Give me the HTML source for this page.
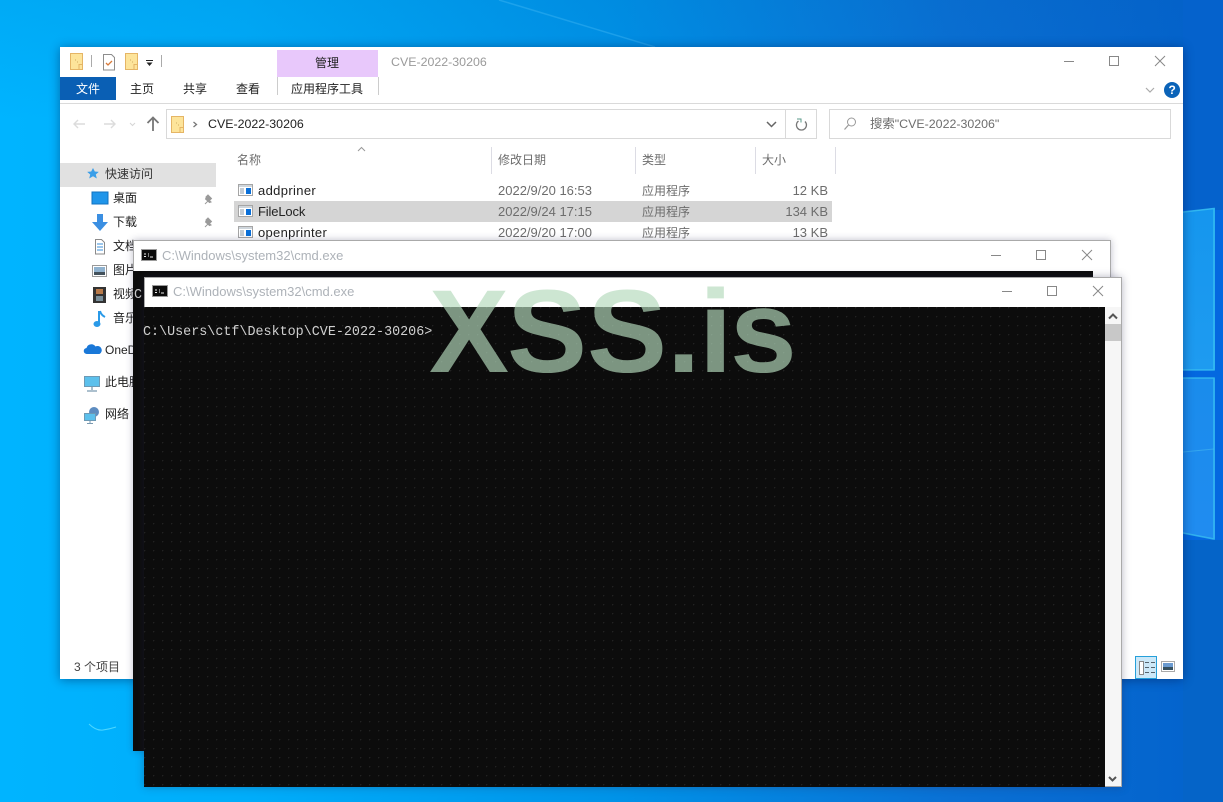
<!DOCTYPE html>
<html lang="zh"><head><meta charset="utf-8"><title>CVE-2022-30206</title>
<style>
html,body{margin:0;padding:0;width:1223px;height:802px;overflow:hidden;background:#0078dc}
body{position:relative;font-family:"Liberation Sans","Noto Sans CJK SC",sans-serif;font-size:12px;color:#222}
.t{position:absolute;white-space:nowrap;line-height:16px}
.box{position:absolute;box-sizing:border-box}
svg{position:absolute;left:0;top:0}
.f{font-size:13px;color:#222}
.d{font-size:13px;color:#6d6d6d}
.n{color:#6d6d6d}
.m{color:#adb2b8;font-size:13px}
</style></head><body>

<svg width="1223" height="802" viewBox="0 0 1223 802">
<defs>
<linearGradient id="bg" x1="0" y1="0" x2="1" y2="0">
<stop offset="0" stop-color="#00b4ff"/><stop offset=".2" stop-color="#00adfa"/><stop offset=".5" stop-color="#0093e8"/><stop offset=".78" stop-color="#0a70d4"/><stop offset="1" stop-color="#0362cc"/>
</linearGradient>
<linearGradient id="top" x1="0" y1="0" x2="0" y2="1"><stop offset="0" stop-color="#0050a0" stop-opacity=".1"/><stop offset="1" stop-color="#0050a0" stop-opacity="0"/></linearGradient>
<linearGradient id="p1" x1="0" y1="0" x2="0" y2="1"><stop offset="0" stop-color="#1596ee"/><stop offset="1" stop-color="#1e9bf0"/></linearGradient>
<linearGradient id="p2" x1="0" y1="0" x2="0" y2="1"><stop offset="0" stop-color="#1a8cec"/><stop offset="1" stop-color="#208cf0"/></linearGradient>
</defs>
<rect width="1223" height="802" fill="url(#bg)"/>
<rect width="1223" height="120" fill="url(#top)"/>
<rect x="1183" y="540" width="40" height="262" fill="#0564c8"/>
<rect x="1183" y="0" width="40" height="210" fill="#0562cc"/>
<rect x="1183" y="210" width="40" height="330" fill="#0468e0"/>
<polygon points="1183,212 1215,208 1215,370 1183,370" fill="url(#p1)"/>
<polygon points="1183,378 1215,378 1215,539 1183,533" fill="url(#p2)"/>
<polyline points="1183,212 1214,208.5 1214,370 1183,370" fill="none" stroke="#3cc4f2" stroke-width="1.6" opacity=".75"/>
<polyline points="1183,378 1214,378 1214,539 1183,533" fill="none" stroke="#3cc4f2" stroke-width="1.6" opacity=".75"/>
<line x1="1183" y1="452" x2="1214" y2="449" stroke="#4cc0f0" stroke-width="1" opacity=".5"/>
<line x1="499" y1="0" x2="655" y2="47" stroke="#6fd2ff" stroke-width="1.5" opacity=".25"/>
<path d="M89 724 Q96 731 103 730 Q110 729 116 727" fill="none" stroke="#5fe0ff" stroke-width="1" opacity=".8"/>
</svg>

<!-- Explorer -->
<div class="box" style="left:60px;top:47px;width:1123px;height:632px;background:#fff;box-shadow:0 1px 10px rgba(0,20,70,.45)"></div>
<div class="box" style="left:277px;top:50px;width:101px;height:27px;background:#e8c8fb"></div>
<div class="box" style="left:60px;top:77px;width:56px;height:23px;background:#0a5fb4"></div>
<div class="box" style="left:277px;top:77px;width:102px;height:18px;border-left:1px solid #ccc;border-right:1px solid #ccc"></div>
<div class="box" style="left:60px;top:103px;width:1123px;height:1px;background:#dadada"></div>
<div class="box" style="left:166px;top:109px;width:651px;height:30px;border:1px solid #d9d9d9"></div>
<div class="box" style="left:785px;top:109px;width:1px;height:30px;background:#d9d9d9"></div>
<div class="box" style="left:829px;top:109px;width:342px;height:30px;border:1px solid #d9d9d9"></div>
<div class="box" style="left:60px;top:163px;width:156px;height:24px;background:#e1e1e1"></div>
<div class="box" style="left:234px;top:201px;width:598px;height:21px;background:#d5d5d5"></div>
<div class="box" style="left:491px;top:147px;width:1px;height:27px;background:#dcdce4"></div>
<div class="box" style="left:635px;top:147px;width:1px;height:27px;background:#dcdce4"></div>
<div class="box" style="left:755px;top:147px;width:1px;height:27px;background:#dcdce4"></div>
<div class="box" style="left:835px;top:147px;width:1px;height:27px;background:#dcdce4"></div>
<div class="box" style="left:1135px;top:656px;width:22px;height:23px;background:#cce8f8;border:1px solid #26a0da"></div>

<svg width="1223" height="802" viewBox="0 0 1223 802">
<defs>
<g id="fold"><rect x=".5" y=".5" width="12" height="16" fill="#fde49a" stroke="#e5b565"/><path d="M9 16.500v-5h3.500" fill="none" stroke="#e5b565"/><path d="M5 7h1M7 9h1" stroke="#d0ab62"/></g>
<g id="exe"><rect x=".5" y=".5" width="14" height="11" fill="#fff" stroke="#a5a5a5"/><rect x="1" y="1" width="13" height="2" fill="#cfd6dc"/><rect x="8" y="4" width="5" height="6" fill="#0a6fd8"/><path d="M2 5h4M2 7h4M2 9h4" stroke="#8a9aa8"/></g>
</defs>
<use href="#fold" x="70" y="53"/><use href="#fold" x="125" y="53"/><use href="#fold" x="171" y="116"/>
<path d="M91.500 55v12M161.500 55v12" stroke="#aaa"/>
<path d="M103.500 54.500h8l3 3v12.500h-11z" fill="#fff" stroke="#8d8d8d"/><path d="M106 63l2 2 4-4" fill="none" stroke="#d77a3a" stroke-width="1.300"/>
<path d="M146 60.500h7" stroke="#222"/><path d="M146.500 62.500h6l-3 3.500z" fill="#222"/>
<!-- controls -->
<path d="M1064 61.500h10" stroke="#888"/><rect x="1109.500" y="56.500" width="9" height="9" fill="none" stroke="#888"/><path d="M1155 56l10 10M1165 56l-10 10" stroke="#888"/>
<path d="M1146 88l4 4 4-4" fill="none" stroke="#aaa" stroke-width="1.200"/>
<circle cx="1172" cy="90" r="8" fill="#0b63b8"/>
<!-- nav -->
<path d="M74 124h11M78 120l-4 4 4 4" fill="none" stroke="#dcdcdc" stroke-width="1.400"/>
<path d="M104 124h11M111 120l4 4-4 4" fill="none" stroke="#dcdcdc" stroke-width="1.400"/>
<path d="M130 123l2.500 2.500 2.500-2.500" fill="none" stroke="#d5d5d5"/>
<path d="M153 131v-13M147.500 123l5.500-5.500 5.500 5.500" fill="none" stroke="#777" stroke-width="1.800"/>
<path d="M193.500 122l3 2.500-3 2.500" fill="none" stroke="#777" stroke-width="1.300"/>
<path d="M767 122l4.500 4.500 4.500-4.500" fill="none" stroke="#666" stroke-width="1.500"/>
<path d="M805 121.500a5 5 0 1 1-6.500-.5" fill="none" stroke="#777" stroke-width="1.300"/><path d="M797 119h4v3.500" fill="none" stroke="#5a9a8a" stroke-width="1"/>
<circle cx="851.500" cy="122" r="4" fill="none" stroke="#999"/><path d="M848.500 125l-4 4.500" stroke="#999" stroke-width="1.200"/>
<path d="M358 151l3.500-3.500 3.500 3.500" fill="none" stroke="#999"/>
<use href="#exe" x="238" y="184"/><use href="#exe" x="238" y="205"/><use href="#exe" x="238" y="226"/>
<!-- sidebar icons -->
<path d="M93 168l1.800 3.500 4 .4-3 2.600 1 4-3.800-2.200-3.800 2.200 1-4-3-2.600 4-.4z" fill="#3a9ee8"/>
<rect x="92" y="192" width="16" height="12" fill="#1f95ea" stroke="#1272c0"/>
<path d="M97 214h6v8h5l-8 9-8-9h5z" fill="#3b8fe2"/>
<path d="M95.500 239.500h6l3 3v11.500h-9z" fill="#fff" stroke="#8a8a8a"/><path d="M97 244h6M97 247h6M97 250h6" stroke="#3a8fd8"/>
<rect x="92.500" y="265.500" width="14" height="11" fill="#fff" stroke="#999"/><rect x="94" y="267" width="11" height="8" fill="#8fb2cf"/><rect x="94" y="272" width="11" height="3" fill="#44525c"/>
<rect x="93" y="287" width="13" height="16" fill="#333"/><rect x="96" y="289" width="7" height="5" fill="#b87a4a"/><rect x="96" y="296" width="7" height="5" fill="#7a8f9a"/>
<path d="M99 311v12" stroke="#2a9ae8" stroke-width="2"/><ellipse cx="97" cy="324" rx="3.500" ry="3" fill="#2a9ae8"/><path d="M100 311q1 4 5 6" fill="none" stroke="#2a9ae8" stroke-width="2"/>
<path d="M87 354a3 3 0 0 1-.5-6 5 5 0 0 1 9-1.500 4 4 0 0 1 4 7.500z" fill="#1a78d8"/>
<rect x="84.500" y="376.500" width="15" height="10" fill="#5cc0ec" stroke="#6d9ab5"/><path d="M92 387v3M87 391h10" stroke="#7a9ab0" stroke-width="1.300"/>
<circle cx="94" cy="412" r="5" fill="#5d8cc0"/><rect x="84.500" y="413.500" width="11" height="7" fill="#5cc0ec" stroke="#6d9ab5"/><path d="M90 421v2M87 423.500h6" stroke="#7a9ab0"/>
<g stroke="#9a9a9a" fill="#9a9a9a"><path d="M205 204l3-3" fill="none"/><path d="M206 198l5 4-1.500 .5-4-3.500z M208 195l3.500 3.500-2 2-3.500-3.500z"/><path d="M205 227l3-3" fill="none"/><path d="M206 221l5 4-1.500 .5-4-3.500z M208 218l3.500 3.500-2 2-3.500-3.500z"/></g>
<!-- view icons -->
<rect x="1139.500" y="661.500" width="4" height="13" fill="#fff" stroke="#888"/><path d="M1145 662.500h4M1151 662.500h4M1145 667.500h4M1151 667.500h4M1145 672.500h4M1151 672.500h4" stroke="#55646e"/>
<rect x="1161.500" y="661.500" width="13" height="10" fill="#fff" stroke="#aaa"/><rect x="1163" y="663" width="10" height="7" fill="#6a9ad0"/><rect x="1163" y="667" width="10" height="3" fill="#36505f"/>
</svg>

<div class="t" style="left:315px;top:55px">管理</div>
<div class="t" style="left:391px;top:54px;color:#9a9a9a;font-size:12.400px">CVE-2022-30206</div>
<div class="t" style="left:76px;top:81px;color:#fff">文件</div>
<div class="t" style="left:130px;top:81px">主页</div>
<div class="t" style="left:183px;top:81px">共享</div>
<div class="t" style="left:236px;top:81px">查看</div>
<div class="t" style="left:291px;top:81px">应用程序工具</div>
<div class="t" style="left:1168.500px;top:82px;color:#fff;font-weight:bold">?</div>
<div class="t" style="left:208px;top:116px;font-size:12.400px">CVE-2022-30206</div>
<div class="t n" style="left:870px;top:116px;font-size:12.400px">搜索"CVE-2022-30206"</div>
<div class="t n" style="left:237px;top:152px">名称</div>
<div class="t n" style="left:498px;top:152px">修改日期</div>
<div class="t n" style="left:642px;top:152px">类型</div>
<div class="t n" style="left:762px;top:152px">大小</div>
<div class="t f" style="left:258px;top:183px;letter-spacing:.35px">addpriner</div>
<div class="t d" style="left:498px;top:183px">2022/9/20 16:53</div>
<div class="t n" style="left:642px;top:183px">应用程序</div>
<div class="t d" style="right:395px;top:183px">12 KB</div>
<div class="t f" style="left:258px;top:204px;letter-spacing:-.15px">FileLock</div>
<div class="t d" style="left:498px;top:204px">2022/9/24 17:15</div>
<div class="t n" style="left:642px;top:204px">应用程序</div>
<div class="t d" style="right:395px;top:204px">134 KB</div>
<div class="t f" style="left:258px;top:225px;letter-spacing:.3px">openprinter</div>
<div class="t d" style="left:498px;top:225px">2022/9/20 17:00</div>
<div class="t n" style="left:642px;top:225px">应用程序</div>
<div class="t d" style="right:395px;top:225px">13 KB</div>
<div class="t" style="left:105px;top:166px;color:#333">快速访问</div>
<div class="t" style="left:113px;top:190px">桌面</div>
<div class="t" style="left:113px;top:214px">下载</div>
<div class="t" style="left:113px;top:238px">文档</div>
<div class="t" style="left:113px;top:262px">图片</div>
<div class="t" style="left:113px;top:286px">视频</div>
<div class="t" style="left:113px;top:310px">音乐</div>
<div class="t" style="left:105px;top:342px">OneDrive</div>
<div class="t" style="left:105px;top:374px">此电脑</div>
<div class="t" style="left:105px;top:406px">网络</div>
<div class="t" style="left:74px;top:659px;color:#444">3 个项目</div>

<!-- cmd 1 -->
<div class="box" style="left:133px;top:240px;width:978px;height:511px;background:#fff;border:1px solid #aaa;box-shadow:0 0 7px rgba(40,40,80,.3)"></div>
<div class="box" style="left:133px;top:271px;width:960px;height:480px;background:#0c0c0c"></div>
<div class="t" style="left:134px;top:288px;color:#ccc;font:13.400px/16px 'Liberation Mono',monospace">C</div>
<svg width="1223" height="802" viewBox="0 0 1223 802">
<rect x="141.500" y="249.500" width="15" height="11" fill="#0c0c0c" stroke="#9a9a9a"/><path d="M144 254h2M144 256.500h2M148 254h1M148 256h1M150 257h3" stroke="#eee"/>
<path d="M991 255.500h10" stroke="#888"/><rect x="1036.500" y="250.500" width="9" height="9" fill="none" stroke="#888"/><path d="M1082 250l10 10M1092 250l-10 10" stroke="#888"/>
</svg>
<div class="t m" style="left:162px;top:248px">C:\Windows\system32\cmd.exe</div>

<!-- cmd 2 -->
<div class="box" style="left:144px;top:277px;width:978px;height:510px;background:#fff;border:1px solid #aaa;box-shadow:0 0 8px rgba(40,40,80,.35)"></div>
<div class="box" style="left:144px;top:307px;width:961px;height:480px;background-color:#0c0c0c;background-image:radial-gradient(circle at .5px .5px,rgba(255,255,255,.09) .7px,transparent 1px);background-size:9px 9px"></div>
<div class="box" style="left:1105px;top:307px;width:16px;height:479px;background:#f6f6f6"></div>
<div class="box" style="left:1105px;top:324px;width:16px;height:17px;background:#c8c8c8"></div>
<svg width="1223" height="802" viewBox="0 0 1223 802">
<rect x="152.500" y="285.500" width="15" height="11" fill="#0c0c0c" stroke="#9a9a9a"/><path d="M155 290h2M155 292.500h2M159 290h1M159 292h1M161 293h3" stroke="#eee"/>
<path d="M1002 291.500h10" stroke="#888"/><rect x="1047.500" y="286.500" width="9" height="9" fill="none" stroke="#888"/><path d="M1093 286l10 10M1103 286l-10 10" stroke="#888"/>
<path d="M1109 318.500l4-4 4 4" fill="none" stroke="#555" stroke-width="2"/>
<path d="M1109 777l3.500 3.500 3.500-3.500" fill="none" stroke="#555" stroke-width="2"/>
</svg>
<div class="t m" style="left:173px;top:284px">C:\Windows\system32\cmd.exe</div>
<div class="t" style="left:143px;top:325px;color:#d0d0d0;font:13.400px/16px 'Liberation Mono',monospace">C:\Users\ctf\Desktop\CVE-2022-30206&gt;</div>

<!-- watermark -->
<svg width="1223" height="802" viewBox="0 0 1223 802">
<g transform="translate(0,372) scale(1,.98)" font-family="'Liberation Sans',sans-serif" font-weight="bold" font-size="120" fill="rgb(180,218,188)" fill-opacity=".67">
<text x="429" y="0">X</text><text x="507" y="0">S</text><text x="587" y="0">S</text><text x="667" y="0">.</text><text x="699" y="0">i</text><text x="730" y="0">s</text>
</g>
</svg>
</body></html>
